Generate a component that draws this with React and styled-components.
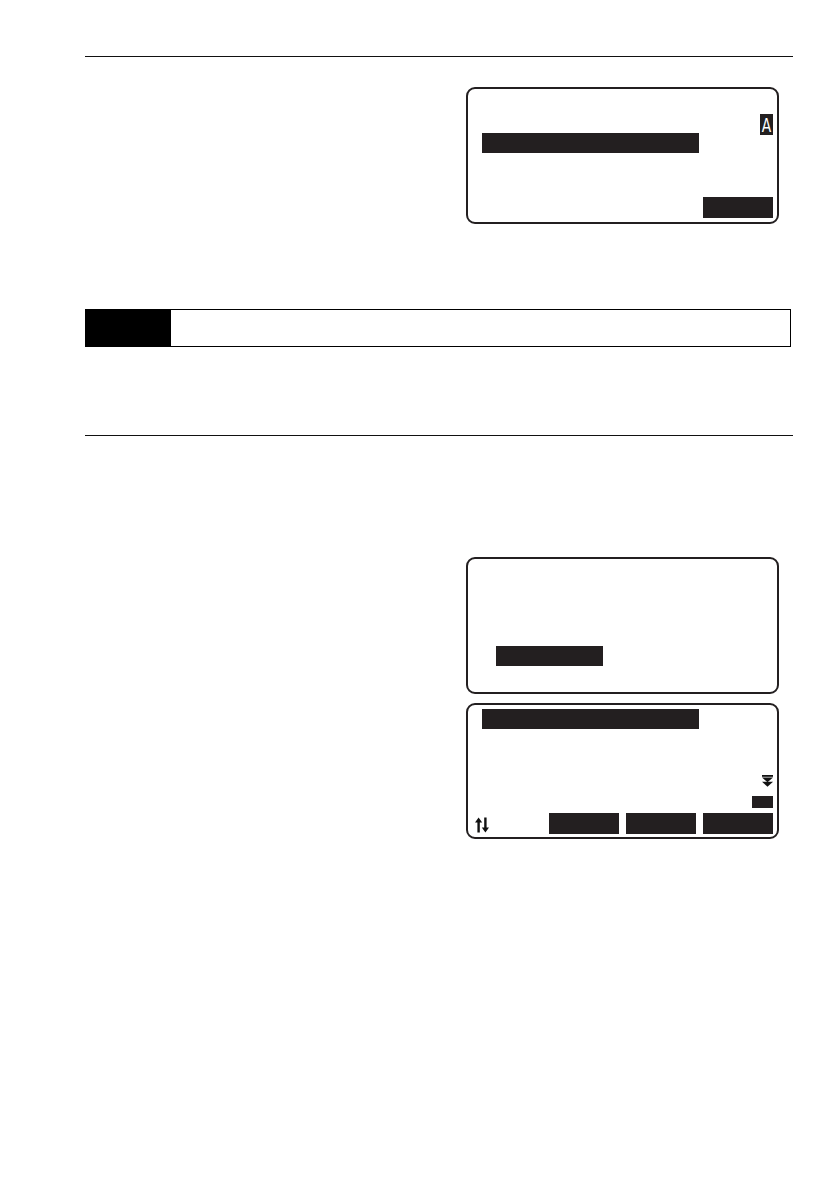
import React from "react";
import styled, { createGlobalStyle } from "styled-components";

const Global = createGlobalStyle`
  html, body { margin: 0; padding: 0; background: #fff; }
  body { font-family: "Liberation Sans", Arial, sans-serif; }
`;

const Page = styled.div`
  width: 840px;
  min-height: 1186px;
  box-sizing: border-box;
  padding: 56px 47px 0 85px;
  background: #fff;
`;

const Rule = styled.div`
  height: 0;
  border-top: 1.5px solid #111;
  margin-top: ${(p) => p.$top || 0}px;
`;

const ScreenColumn = styled.div`
  display: flex;
  flex-direction: column;
  align-items: flex-end;
  padding-right: 14px;
  gap: 9px;
  margin-top: ${(p) => p.$top || 0}px;
`;

const Screen = styled.div`
  width: 313px;
  height: ${(p) => p.$h}px;
  box-sizing: border-box;
  border: 2px solid #231f20;
  border-radius: 9px;
  padding: 0 4px 0 14px;
  display: flex;
  flex-direction: column;
  background: #fff;
`;

const Bar = styled.div`
  width: ${(p) => p.$w}px;
  height: 20px;
  background: #231f20;
  margin-top: ${(p) => p.$top || 0}px;
  margin-left: ${(p) => p.$left || 0}px;
  flex-shrink: 0;
`;

const RightRow = styled.div`
  display: flex;
  justify-content: flex-end;
  margin-top: ${(p) => p.$top || 0}px;
  padding-right: ${(p) => p.$pr || 0}px;
  height: ${(p) => p.$h}px;
  flex-shrink: 0;
`;

const ModeBadge = styled.div`
  width: 13px;
  height: 21px;
  background: #231f20;
  color: #fff;
  font-family: "DejaVu Sans Condensed", "Liberation Sans Narrow", sans-serif;
  font-size: 18px;
  line-height: 21px;
  text-align: center;
  overflow: hidden;
`;

const BadgeGlyph = styled.span`
  display: inline-block;
  transform: scale(0.85, 1.12);
`;

const SmallTag = styled.div`
  width: 21px;
  height: 12px;
  background: #231f20;
`;

const SoftKeys = styled.div`
  margin-top: auto;
  margin-bottom: ${(p) => p.$mb}px;
  display: flex;
  align-items: center;
  gap: 7px;
  height: 21px;
`;

const SoftKey = styled.div`
  width: 70px;
  height: 21px;
  background: #231f20;
  flex-shrink: 0;
`;

const Spacer = styled.div`
  flex: 1;
`;

const IconWrap = styled.span`
  display: inline-flex;
  margin-left: -7px;
  margin-top: 2px;
`;

const NoteBox = styled.div`
  margin-top: ${(p) => p.$top}px;
  margin-right: 2px;
  height: 38px;
  box-sizing: border-box;
  border: 1.5px solid #000;
  display: flex;
`;

const NoteLabel = styled.div`
  width: 85px;
  background: #000;
`;

const UpDownIcon = () => (
  <svg width="14" height="16" viewBox="0 0 14 16">
    <path d="M3.6 0.5 L0 5.5 H2.4 V15.5 H4.8 V5.5 H7.2 Z" fill="#111" />
    <path d="M10.4 15.5 L6.8 10.5 H9.2 V0.5 H11.6 V10.5 H14 Z" fill="#111" />
  </svg>
);

const PageDownIcon = () => (
  <svg width="11" height="12" viewBox="0 0 11 12">
    <rect x="0" y="0" width="11" height="1.8" fill="#111" />
    <path d="M0 2.6 H11 L5.5 7.2 Z" fill="#111" />
    <path d="M0 6.8 H11 L5.5 11.8 Z" fill="#111" />
  </svg>
);

export default function App() {
  return (
    <>
      <Global />
      <Page>
        <Rule />
        <ScreenColumn $top={30}>
          <Screen $h={137}>
            <RightRow $top={25} $h={21}>
              <ModeBadge>
                <BadgeGlyph>A</BadgeGlyph>
              </ModeBadge>
            </RightRow>
            <Bar $w={217} $top={-2} />
            <SoftKeys $mb={4}>
              <Spacer />
              <SoftKey />
            </SoftKeys>
          </Screen>
        </ScreenColumn>

        <NoteBox $top={85}>
          <NoteLabel />
        </NoteBox>

        <Rule $top={88} />

        <ScreenColumn $top={121}>
          <Screen $h={137}>
            <Bar $w={107} $top={87} $left={14} />
          </Screen>
          <Screen $h={136}>
            <Bar $w={217} $top={4} />
            <RightRow $top={46} $h={12} $pr={0}>
              <PageDownIcon />
            </RightRow>
            <RightRow $top={9} $h={12} $pr={0}>
              <SmallTag />
            </RightRow>
            <SoftKeys $mb={3}>
              <IconWrap>
                <UpDownIcon />
              </IconWrap>
              <Spacer />
              <SoftKey />
              <SoftKey />
              <SoftKey />
            </SoftKeys>
          </Screen>
        </ScreenColumn>
      </Page>
    </>
  );
}
